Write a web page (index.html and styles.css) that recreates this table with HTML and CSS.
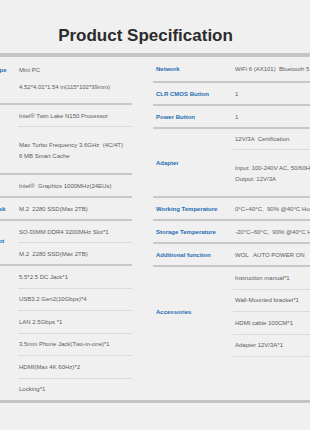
FILE: index.html
```html
<!DOCTYPE html>
<html lang="en">
<head>
<meta charset="utf-8">
<title>Product Specification</title>
<link rel="stylesheet" href="styles.css">
</head>
<body>
<header class="header">
  <h1 class="title">Product Specification</h1>
</header>
<section class="specs">
  <div class="table left">
    <div class="group">
      <div class="label top">Type</div>
      <div class="vals">
        <div class="item pair"><span>Mini PC</span><span>4.52*4.01*1.54 in(115*102*39mm)</span></div>
      </div>
    </div>
    <div class="group">
      <div class="label"></div>
      <div class="vals">
        <div class="item">Intel® Twin Lake N150 Processor</div>
        <div class="item tall"><span>Max Turbo Frequency 3.6GHz  (4C/4T)</span><span>6 MB Smart Cache</span></div>
      </div>
    </div>
    <div class="group">
      <div class="label"></div>
      <div class="vals">
        <div class="item">Intel®  Graphics 1000MHz(24EUs)</div>
      </div>
    </div>
    <div class="group">
      <div class="label">Disk</div>
      <div class="vals">
        <div class="item">M.2  2280 SSD(Max 2TB)</div>
      </div>
    </div>
    <div class="group">
      <div class="label raised">Slot</div>
      <div class="vals">
        <div class="item">SO-DIMM DDR4 3200MHz Slot*1</div>
        <div class="item">M.2  2280 SSD(Max 2TB)</div>
      </div>
    </div>
    <div class="group open list">
      <div class="label"></div>
      <div class="vals">
        <div class="item">5.5*2.5 DC Jack*1</div>
        <div class="item">USB3.2 Gen2(10Gbps)*4</div>
        <div class="item">LAN 2.5Gbps *1</div>
        <div class="item">3.5mm Phone Jack(Two-in-one)*1</div>
        <div class="item">HDMI(Max 4K 60Hz)*2</div>
        <div class="item">Locking*1</div>
      </div>
    </div>
  </div>

  <div class="table right">
    <div class="group">
      <div class="label">Network</div>
      <div class="vals">
        <div class="item h24">WiFi 6 (AX101)  Bluetooth 5.2</div>
      </div>
    </div>
    <div class="group">
      <div class="label">CLR CMOS Button</div>
      <div class="vals">
        <div class="item">1</div>
      </div>
    </div>
    <div class="group">
      <div class="label">Power Button</div>
      <div class="vals">
        <div class="item">1</div>
      </div>
    </div>
    <div class="group">
      <div class="label">Adapter</div>
      <div class="vals">
        <div class="item h20">12V/3A  Certification</div>
        <div class="item tall"><span>Input: 100-240V AC, 50/60Hz</span><span>Output: 12V/3A</span></div>
      </div>
    </div>
    <div class="group">
      <div class="label">Working Temperature</div>
      <div class="vals">
        <div class="item">0°C~40°C,  90% @40°C Humidity</div>
      </div>
    </div>
    <div class="group">
      <div class="label">Storage Temperature</div>
      <div class="vals">
        <div class="item">-20°C~60°C,  90% @40°C Humidity</div>
      </div>
    </div>
    <div class="group">
      <div class="label">Additional function</div>
      <div class="vals">
        <div class="item">WOL   AUTO POWER ON</div>
      </div>
    </div>
    <div class="group open list closed-list">
      <div class="label">Accessories</div>
      <div class="vals">
        <div class="item">Instruction manual*1</div>
        <div class="item">Wall-Mounted bracket*1</div>
        <div class="item">HDMI cable 100CM*1</div>
        <div class="item">Adapter 12V/3A*1</div>
      </div>
    </div>
  </div>
</section>
</body>
</html>
```

FILE: styles.css
```css
* {
  box-sizing: border-box;
  margin: 0;
  padding: 0;
}

html,
body {
  background: #f0f0f0;
}

body {
  width: 310px;
  height: 430px;
  overflow: hidden;
  font-family: "Liberation Sans", Arial, sans-serif;
}

.header {
  height: 57px;
  padding-top: 27px;
  padding-right: 19px;
  text-align: center;
  border-bottom: 4px solid #c6c6c6;
}

.title {
  font-size: 17px;
  line-height: 17px;
  font-weight: 700;
  color: #2b2b2b;
}

.specs {
  display: flex;
  align-items: flex-start;
  gap: 21px;
  border-bottom: 3px solid #c4c4c4;
}

.table {
  flex: none;
  display: flex;
  flex-direction: column;
}

.left {
  width: 139px;
  margin-left: -7px;
}

.right {
  width: 200px;
}

.group {
  display: grid;
  grid-template-columns: 25px 1fr;
  border-bottom: 2px solid #c8c8c8;
}

.right .group {
  grid-template-columns: 80px 1fr;
}

.group.open {
  border-bottom: none;
}

.label {
  align-self: center;
  font-size: 6px;
  font-weight: 700;
  color: #1f6db3;
  white-space: nowrap;
}

.right .label {
  padding-left: 3px;
}

.label.top {
  align-self: start;
  padding-top: 5px;
  line-height: 17px;
}

.label.raised {
  margin-bottom: 4px;
}

.vals {
  display: flex;
  flex-direction: column;
}

.item {
  box-sizing: content-box;
  height: 21px;
  display: flex;
  align-items: center;
  padding-left: 1px;
  font-size: 6px;
  color: #5c5c5c;
  white-space: pre;
  border-bottom: 1px solid #dadada;
}

.right .item {
  padding-left: 2px;
}

.item:last-child {
  border-bottom: none;
}

.list .item {
  height: 21.5px;
}

.closed-list .item:last-child {
  border-bottom: 1px solid #dadada;
}

.item.h20 {
  height: 20px;
}

.item.h24 {
  height: 24px;
}

.item.tall {
  height: 46px;
  flex-direction: column;
  align-items: flex-start;
  justify-content: center;
  padding-top: 2px;
  height: 44px;
  line-height: 11px;
}

.item.pair {
  height: 41px;
  flex-direction: column;
  align-items: flex-start;
  justify-content: flex-start;
  padding-top: 5px;
  line-height: 17px;
}
```
